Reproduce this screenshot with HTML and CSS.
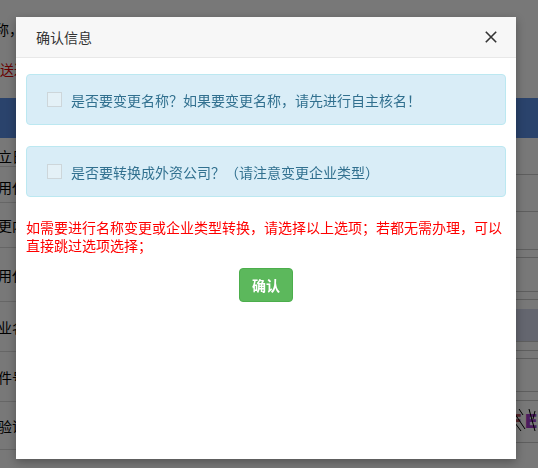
FILE: index.html
```html
<!DOCTYPE html>
<html lang="zh-CN">
<head>
<meta charset="utf-8">
<title>确认信息</title>
<link rel="stylesheet" href="styles.css">
</head>
<body>
<div class="page">
  <div class="page-top">
    <div class="line line-1">称，如需</div>
    <div class="line line-2 red">送达</div>
  </div>
  <div class="bar"></div>
  <div class="rows">
    <div class="col-left">
      <div class="row r1">立日</div>
      <div class="row r2">用代</div>
      <div class="row r3">更内</div>
      <div class="row r4">用代</div>
      <div class="row r5">业名</div>
      <div class="row r6">件号</div>
      <div class="row r7">验证</div>
    </div>
    <div class="col-right">
      <div class="seg h37"></div>
      <div class="seg h37"></div>
      <div class="seg h38"></div>
      <div class="seg h8"></div>
      <div class="seg h34"></div>
      <div class="seg h8"></div>
      <div class="gap10"></div>
      <div class="inputbox"></div>
      <div class="seg h9"></div>
      <div class="seg h8"></div>
      <div class="seg h33"></div>
      <div class="seg h9"></div>
      <div class="captcha"><span class="c1">F</span><span class="c2">E</span>
        <svg class="noise" width="40" height="24" viewBox="0 0 40 24"><path d="M4 6 L16 22 M8 2 L20 20 M14 0 L18 6 M24 0 L30 22 M30 2 L28 10" stroke="#000" stroke-width="1" fill="none"/></svg>
      </div>
      <div class="seg h10"></div>
    </div>
  </div>
</div>
<div class="overlay"></div>
<div class="modal">
  <div class="modal-header">
    <span class="modal-title">确认信息</span>
    <svg class="close" width="12" height="12" viewBox="0 0 12 12"><path d="M0.8 0.8 L11.2 11.2 M11.2 0.8 L0.8 11.2" stroke="#333" stroke-width="1.6" fill="none"/></svg>
  </div>
  <div class="modal-body">
    <div class="alert"><span class="check"></span><span>是否要变更名称？如果要变更名称，请先进行自主核名！</span></div>
    <div class="alert"><span class="check"></span><span>是否要转换成外资公司？（请注意变更企业类型）</span></div>
    <p class="notice">如需要进行名称变更或企业类型转换，请选择以上选项；若都无需办理，可以直接跳过选项选择；</p>
    <div class="actions"><button class="btn-ok">确认</button></div>
  </div>
</div>
</body>
</html>
```

FILE: styles.css
```css
html, body {
  margin: 0;
  padding: 0;
}
body {
  width: 538px;
  height: 468px;
  overflow: hidden;
  background: #fff;
  font-family: "Noto Sans CJK SC", "Liberation Sans", sans-serif;
  font-size: 14px;
  color: #000;
}
.page {
  width: 538px;
}
.page-top {
  height: 98px;
  display: flex;
  flex-direction: column;
}
.line {
  height: 20px;
  line-height: 20px;
  white-space: nowrap;
  overflow: hidden;
}
.line-1 {
  margin-top: 19px;
  margin-left: -5px;
}
.line-2 {
  margin-top: 20px;
  margin-left: 0;
}
.red {
  color: #e00000;
}
.bar {
  height: 40px;
  background: #5a8fe6;
}
.rows {
  display: flex;
}
.col-left {
  width: 300px;
  display: flex;
  flex-direction: column;
}
.row {
  border-bottom: 1px solid #d8d8d8;
  white-space: nowrap;
  overflow: hidden;
  display: flex;
  align-items: center;
  margin-left: -2px;
}
.r1 { height: 28px; padding-top: 8px; box-sizing: border-box; height: 29px; }
.r2 { height: 35px; padding-top: 4px; box-sizing: border-box; height: 36px; }
.r3 { height: 44px; }
.r4 { height: 53px; }
.r5 { height: 49px; }
.r6 { height: 49px; }
.r7 { height: 47px; }
.col-right {
  flex: 1;
  display: flex;
  flex-direction: column;
}
.seg {
  border-bottom: 1px solid #c8c8c8;
}
.h37 { height: 36px; }
.h38 { height: 37px; }
.h8 { height: 7px; }
.h9 { height: 8px; }
.h10 { height: 9px; }
.h33 { height: 32px; }
.h34 { height: 33px; }
.gap10 { height: 9px; }
.inputbox {
  height: 32px;
  background: #d4d9ec;
  border-bottom: 1px solid #c8c8c8;
}
.captcha {
  height: 24px;
  margin-top: 8px;
  position: relative;
  font-family: "DejaVu Sans", sans-serif;
  font-weight: bold;
  font-size: 20px;
  line-height: 24px;
  padding-left: 212px;
  white-space: nowrap;
  overflow: hidden;
}
.c1 { color: #b4505a; }
.c2 { color: #a03cc8; margin-left: 2px; }
.noise {
  position: absolute;
  left: 208px;
  top: 0;
}
.overlay {
  position: fixed;
  inset: 0;
  background: rgba(0, 0, 0, 0.53);
}
.modal {
  position: absolute;
  left: 16px;
  top: 17px;
  width: 500px;
  height: 442px;
  background: #fff;
  box-shadow: 0 3px 9px rgba(0, 0, 0, 0.3);
  display: flex;
  flex-direction: column;
}
.modal-header {
  height: 40px;
  padding: 0 20px;
  background: #f7f7f7;
  border-bottom: 1px solid #e8e8e8;
  display: flex;
  align-items: center;
  justify-content: space-between;
}
.modal-title {
  font-size: 14px;
  line-height: 20px;
  color: #333;
}
.close {
  margin-right: -1px;
}
.modal-body {
  padding: 16px 10px 0;
  display: flex;
  flex-direction: column;
}
.alert {
  height: 49px;
  padding: 0 20px;
  border: 1px solid #bce8f1;
  border-radius: 4px;
  background: #d9edf7;
  color: #31708f;
  font-size: 14px;
  display: flex;
  align-items: center;
  margin-bottom: 21px;
}
.check {
  width: 13px;
  height: 13px;
  border: 1px solid #cdd6da;
  background: #e4f1f7;
  margin-right: 9px;
  flex: none;
}
.notice {
  margin: 1px 0 0;
  color: #ff0000;
  font-size: 14px;
  line-height: 17.5px;
}
.actions {
  display: flex;
  justify-content: center;
  margin-top: 14px;
}
.btn-ok {
  width: 54px;
  height: 34px;
  padding: 0;
  border: 1px solid #4cae4c;
  border-radius: 4px;
  background: #5cb85c;
  color: #fff;
  font-family: "Noto Sans CJK SC", sans-serif;
  font-size: 14px;
  font-weight: bold;
}
```
